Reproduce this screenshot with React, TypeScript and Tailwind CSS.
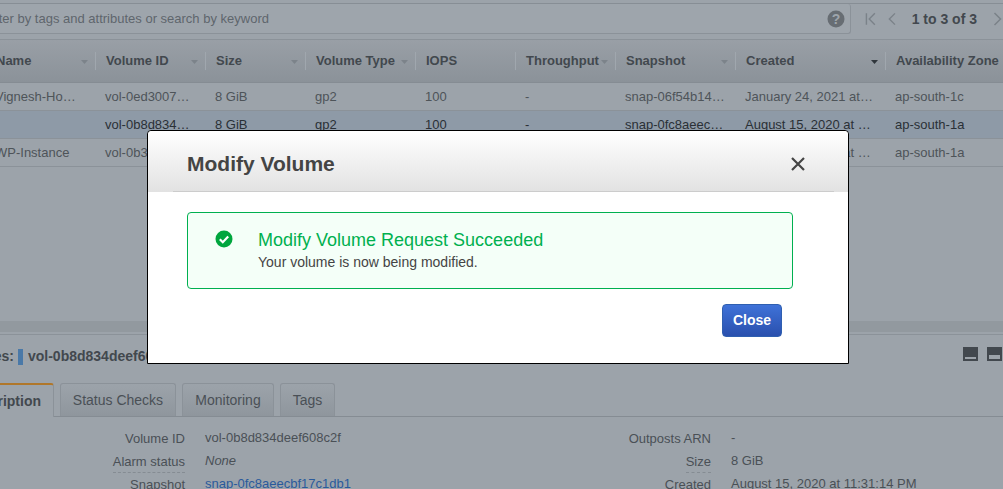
const columns = [
  { label: 'Name', width: 'w-[108px]', caret: 'text-[#7c838a]' },
  { label: 'Volume ID', width: 'w-[110px]', caret: 'text-[#7c838a]' },
  { label: 'Size', width: 'w-[100px]', caret: 'text-[#7c838a]' },
  { label: 'Volume Type', width: 'w-[110px]', caret: 'text-[#7c838a]' },
  { label: 'IOPS', width: 'w-[100px]', caret: '' },
  { label: 'Throughput', width: 'w-[100px]', caret: 'text-[#7c838a]' },
  { label: 'Snapshot', width: 'w-[120px]', caret: 'text-[#7c838a]' },
  { label: 'Created', width: 'w-[150px]', caret: 'text-[#30363c]' },
  { label: 'Availability Zone', width: 'w-[130px]', caret: '' },
];

const rows = [
  { selected: false, cells: ['Vignesh-Ho…', 'vol-0ed3007…', '8 GiB', 'gp2', '100', '-', 'snap-06f54b14…', 'January 24, 2021 at…', 'ap-south-1c'] },
  { selected: true, cells: ['', 'vol-0b8d834…', '8 GiB', 'gp2', '100', '-', 'snap-0fc8aeec…', 'August 15, 2020 at …', 'ap-south-1a'] },
  { selected: false, cells: ['WP-Instance', 'vol-0b3', '8 GiB', 'gp2', '100', '-', 'snap-0fc8aeec…', 'August 15, 2020 at …', 'ap-south-1a'] },
];

function Caret({ className }: { className: string }) {
  return (
    <svg width="7" height="4" viewBox="0 0 7 4" className={`absolute right-[7px] top-[20px] ${className}`}>
      <path d="M0 0h7L3.5 4z" fill="currentColor" />
    </svg>
  );
}

function Detail({ label, value, dashed, italic, link, labelWidth }: { label: string; value: string; dashed?: boolean; italic?: boolean; link?: boolean; labelWidth: string }) {
  return (
    <div className="flex h-[23px] items-start gap-5 text-[13px] leading-[15px]">
      <div className={`${labelWidth} flex justify-end`}>
        <span className={`pb-[3px] text-[#4a5056] ${dashed ? 'border-b border-dashed border-[#858c93]' : ''}`}>{label}</span>
      </div>
      <span className={`-mt-px ${italic ? 'italic' : ''} ${link ? 'text-[#2a5a9c]' : 'text-[#4a5056]'}`}>{value}</span>
    </div>
  );
}

export default function App() {
  return (
    <div className="relative h-[489px] w-[1003px] overflow-hidden bg-[#9ca3aa] font-['Liberation_Sans',Arial,sans-serif] text-[13px] text-[#4a5056]">
      <div className="h-[4px] border-b border-[#878e95]" />

      <div className="flex h-[36px] items-start border-b border-[#8b9299] pb-[5px]">
        <div className="-ml-[15px] flex h-[30px] w-[866px] items-center justify-between rounded-br-[3px] rounded-tr-[3px] border-b border-r border-[#8b9299] bg-[#9ea5ac] pr-[5px]">
          <span className="text-[#5f666c]">Filter by tags and attributes or search by keyword</span>
          <svg width="18" height="18" viewBox="0 0 18 18">
            <circle cx="9" cy="9" r="8.5" fill="#676d73" />
            <text x="9" y="14" textAnchor="middle" fontSize="14" fontWeight="700" fill="#9ea5ac" fontFamily="Liberation Sans">?</text>
          </svg>
        </div>
        <div className="flex h-[30px] flex-1 items-center">
          <svg width="12" height="14" viewBox="0 0 12 14" className="ml-[14px]" fill="none" stroke="#7b8289" strokeWidth="1.5">
            <path d="M1.5 1v12M10.5 1l-6 6 6 6" />
          </svg>
          <svg width="10" height="14" viewBox="0 0 10 14" className="ml-[11px]" fill="none" stroke="#7b8289" strokeWidth="1.5">
            <path d="M8.5 1l-6 6 6 6" />
          </svg>
          <span className="ml-[15px] shrink-0 text-[14px] font-bold text-[#42484e]">1 to 3 of 3</span>
          <svg width="10" height="14" viewBox="0 0 10 14" className="ml-[16px] shrink-0" fill="none" stroke="#7b8289" strokeWidth="1.5">
            <path d="M1.5 1l6 6-6 6" />
          </svg>
        </div>
      </div>

      <div className="-ml-[13px] flex h-[43px] w-[1100px] items-center border-b border-[#858c93] bg-gradient-to-b from-[#999fa6] to-[#8b9299]">
        {columns.map((col, j) => (
          <div key={col.label} className={`relative flex h-[43px] shrink-0 items-center ${j === 0 ? 'pl-[9px]' : 'pl-[11px]'} ${col.width}`}>
            <span className="whitespace-nowrap font-bold text-[#42484e]">{col.label}</span>
            {col.caret && <Caret className={col.caret} />}
            <div className="absolute -right-px top-[12px] h-[18px] w-px bg-[#a0a7ae]" />
          </div>
        ))}
      </div>

      {rows.map((row, i) => (
        <div
          key={i}
          className={`-ml-[13px] flex h-[28px] w-[1100px] items-center border-b border-[#8b9299] ${row.selected ? 'bg-[#8e9aa7] text-[#2a3036]' : 'bg-[#9ca3aa] text-[#4e5459]'}`}
        >
          {row.cells.map((cell, j) => (
            <div key={j} className={`shrink-0 whitespace-nowrap ${j === 0 ? 'pl-[8px]' : 'pl-[10px]'} ${columns[j].width}`}>
              {cell}
            </div>
          ))}
        </div>
      ))}

      <div className="mb-[2px] mt-[154px] h-[11px] bg-[#92999f]" />
      <div className="flex h-[49px] items-start justify-between border-t border-[#8b9299] pt-[11px]">
        <div className="-ml-[48px] flex items-center text-[14px] font-bold text-[#42484e]">
          <span>Volumes:</span>
          <span className="ml-[4px] h-[16px] w-[5px] bg-[#4a79a8]" />
          <span className="ml-[5px]">vol-0b8d834deef608c2f</span>
        </div>
        <div className="mt-px flex gap-[9px] pr-px">
          <svg width="15" height="14" viewBox="0 0 15 14">
            <rect width="15" height="14" fill="#42484e" />
            <rect x="2" y="10" width="11" height="2" fill="#9ca3aa" />
          </svg>
          <svg width="15" height="14" viewBox="0 0 15 14">
            <rect width="15" height="14" fill="#42484e" />
            <rect x="2" y="8" width="11" height="4" fill="#9ca3aa" />
          </svg>
        </div>
      </div>

      <div className="flex h-[34px] items-end gap-[6px] border-b border-[#858c93]">
        <div className="-ml-[50px] -mb-px flex h-[34px] w-[104px] items-center justify-end rounded-t-[3px] border-r border-t-2 border-[#8b9299] border-t-[#b0772a] bg-[#9ca3aa] pr-[12px] text-[14px] font-bold text-[#42484e]">
          Description
        </div>
        {[
          { label: 'Status Checks', width: 'w-[116px]' },
          { label: 'Monitoring', width: 'w-[92px]' },
          { label: 'Tags', width: 'w-[55px]' },
        ].map((tab) => (
          <div
            key={tab.label}
            className={`flex h-[33px] items-center justify-center rounded-t-[3px] border border-b-0 border-[#8b9299] bg-gradient-to-b from-[#9ca3aa] to-[#8f969d] text-[14px] text-[#4a5056] ${tab.width}`}
          >
            {tab.label}
          </div>
        ))}
      </div>

      <div className="flex pt-[14px]">
        <div className="w-[526px] shrink-0">
          <Detail labelWidth="w-[185px]" label="Volume ID" value="vol-0b8d834deef608c2f" />
          <Detail labelWidth="w-[185px]" label="Alarm status" value="None" dashed italic />
          <Detail labelWidth="w-[185px]" label="Snapshot" value="snap-0fc8aeecbf17c1db1" link />
        </div>
        <div>
          <Detail labelWidth="w-[185px]" label="Outposts ARN" value="-" />
          <Detail labelWidth="w-[185px]" label="Size" value="8 GiB" dashed />
          <Detail labelWidth="w-[185px]" label="Created" value="August 15, 2020 at 11:31:14 PM" />
        </div>
      </div>

      <div className="absolute left-[147px] top-[130px] h-[234px] w-[702px] rounded-t-[4px] border border-black bg-white">
        <div className="relative flex h-[61px] items-center justify-between rounded-t-[4px] bg-gradient-to-b from-white to-[#e2e2e2] pl-[39px] pr-[42px] pt-[4px]">
          <h2 className="text-[21px] font-bold text-[#444]">Modify Volume</h2>
          <svg width="16" height="16" viewBox="0 0 16 16" fill="none" stroke="#444" strokeWidth="2.2">
            <path d="M2 2l12 12M14 2L2 14" />
          </svg>
          <div className="absolute bottom-0 left-[25px] right-[14px] h-px bg-[#cccccc]" />
        </div>
        <div className="ml-[39px] mr-[55px] mt-[20px] flex h-[77px] rounded-[4px] border border-[#00b050] bg-[#f4fff8] pl-[27px]">
          <svg width="18" height="18" viewBox="0 0 18 18" className="mt-[17px]">
            <circle cx="9" cy="9" r="8.5" fill="#00a63e" />
            <path d="M4.8 9.2l3 3 5.4-5.6" fill="none" stroke="#fff" strokeWidth="2.2" />
          </svg>
          <div className="ml-[25px] pt-[16px]">
            <div className="text-[18px] leading-[22px] text-[#00b04f]">Modify Volume Request Succeeded</div>
            <div className="mt-[3px] text-[14px] leading-[16px] text-[#444]">Your volume is now being modified.</div>
          </div>
        </div>
        <div className="mr-[66px] mt-[15px] flex justify-end">
          <button className="h-[33px] w-[60px] rounded-[4px] border border-[#2f5fb0] bg-gradient-to-b from-[#3f72d8] to-[#2a50ae] text-[14px] font-bold text-white">
            Close
          </button>
        </div>
      </div>
    </div>
  );
}
